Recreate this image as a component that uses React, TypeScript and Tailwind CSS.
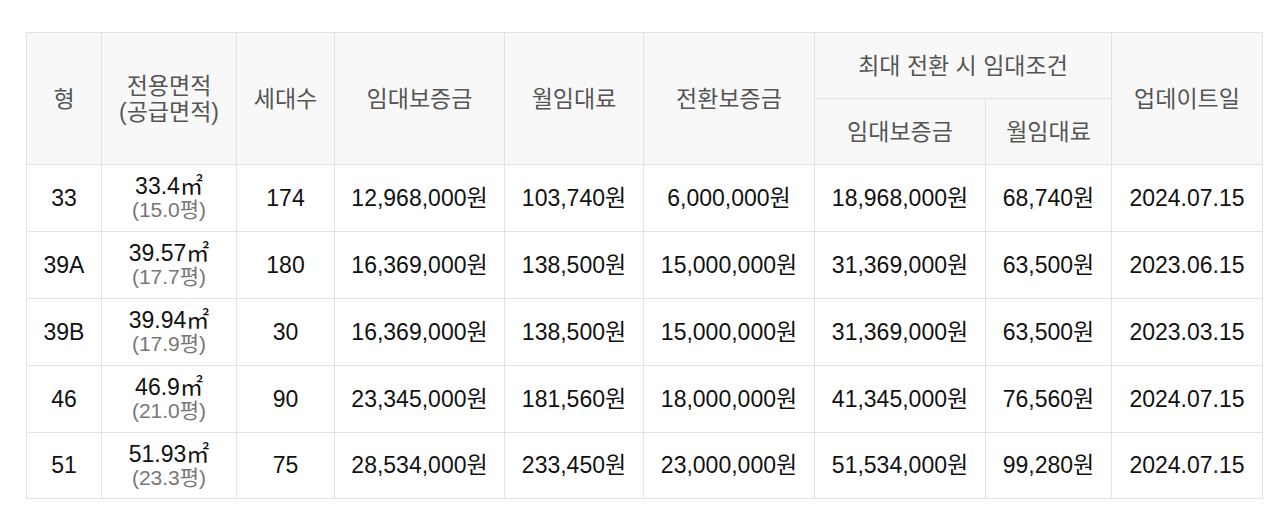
import React from "react";

const rows = [
  ["33", "33.4", "15.0", "174", "12,968,000원", "103,740원", "6,000,000원", "18,968,000원", "68,740원", "2024.07.15"],
  ["39A", "39.57", "17.7", "180", "16,369,000원", "138,500원", "15,000,000원", "31,369,000원", "63,500원", "2023.06.15"],
  ["39B", "39.94", "17.9", "30", "16,369,000원", "138,500원", "15,000,000원", "31,369,000원", "63,500원", "2023.03.15"],
  ["46", "46.9", "21.0", "90", "23,345,000원", "181,560원", "18,000,000원", "41,345,000원", "76,560원", "2024.07.15"],
  ["51", "51.93", "23.3", "75", "28,534,000원", "233,450원", "23,000,000원", "51,534,000원", "99,280원", "2024.07.15"],
];

const widths = [75, 135, 98, 170, 139, 171, 171, 126, 151];

export default function App() {
  const th = "border border-[#e3e3e3] bg-[#f8f8f8] font-normal text-[#555] text-[23px] leading-[26px]";
  const td = "border border-[#e3e3e3] text-center text-[#111] text-[23px]";
  return (
    <div
      className="w-[1280px] h-[508px] bg-white pt-[32px] pl-[26px]"
      style={{ fontFamily: '"Liberation Sans", Arial, "Noto Sans CJK KR", sans-serif' }}
    >
      <table className="border-collapse table-fixed w-[1236px]">
        <colgroup>
          {widths.map((w, i) => (
            <col key={i} style={{ width: w }} />
          ))}
        </colgroup>
        <thead>
          <tr className="h-[66px]">
            <th rowSpan={2} className={th}>형</th>
            <th rowSpan={2} className={th}>
              전용면적
              <br />
              (공급면적)
            </th>
            <th rowSpan={2} className={th}>세대수</th>
            <th rowSpan={2} className={th}>임대보증금</th>
            <th rowSpan={2} className={th}>월임대료</th>
            <th rowSpan={2} className={th}>전환보증금</th>
            <th colSpan={2} className={th}>최대 전환 시 임대조건</th>
            <th rowSpan={2} className={th}>업데이트일</th>
          </tr>
          <tr className="h-[66px]">
            <th className={th}>임대보증금</th>
            <th className={th}>월임대료</th>
          </tr>
        </thead>
        <tbody>
          {rows.map((r, i) => (
            <tr key={i} className={i === 4 ? "h-[66px]" : "h-[67px]"}>
              <td className={td}>{r[0]}</td>
              <td className={td}>
                <div className="leading-[24px]">{r[1]}㎡</div>
                <div className="leading-[24px] text-[#777] text-[21px]">({r[2]}평)</div>
              </td>
              <td className={td}>{r[3]}</td>
              <td className={td}>{r[4]}</td>
              <td className={td}>{r[5]}</td>
              <td className={td}>{r[6]}</td>
              <td className={td}>{r[7]}</td>
              <td className={td}>{r[8]}</td>
              <td className={td}>{r[9]}</td>
            </tr>
          ))}
        </tbody>
      </table>
    </div>
  );
}
